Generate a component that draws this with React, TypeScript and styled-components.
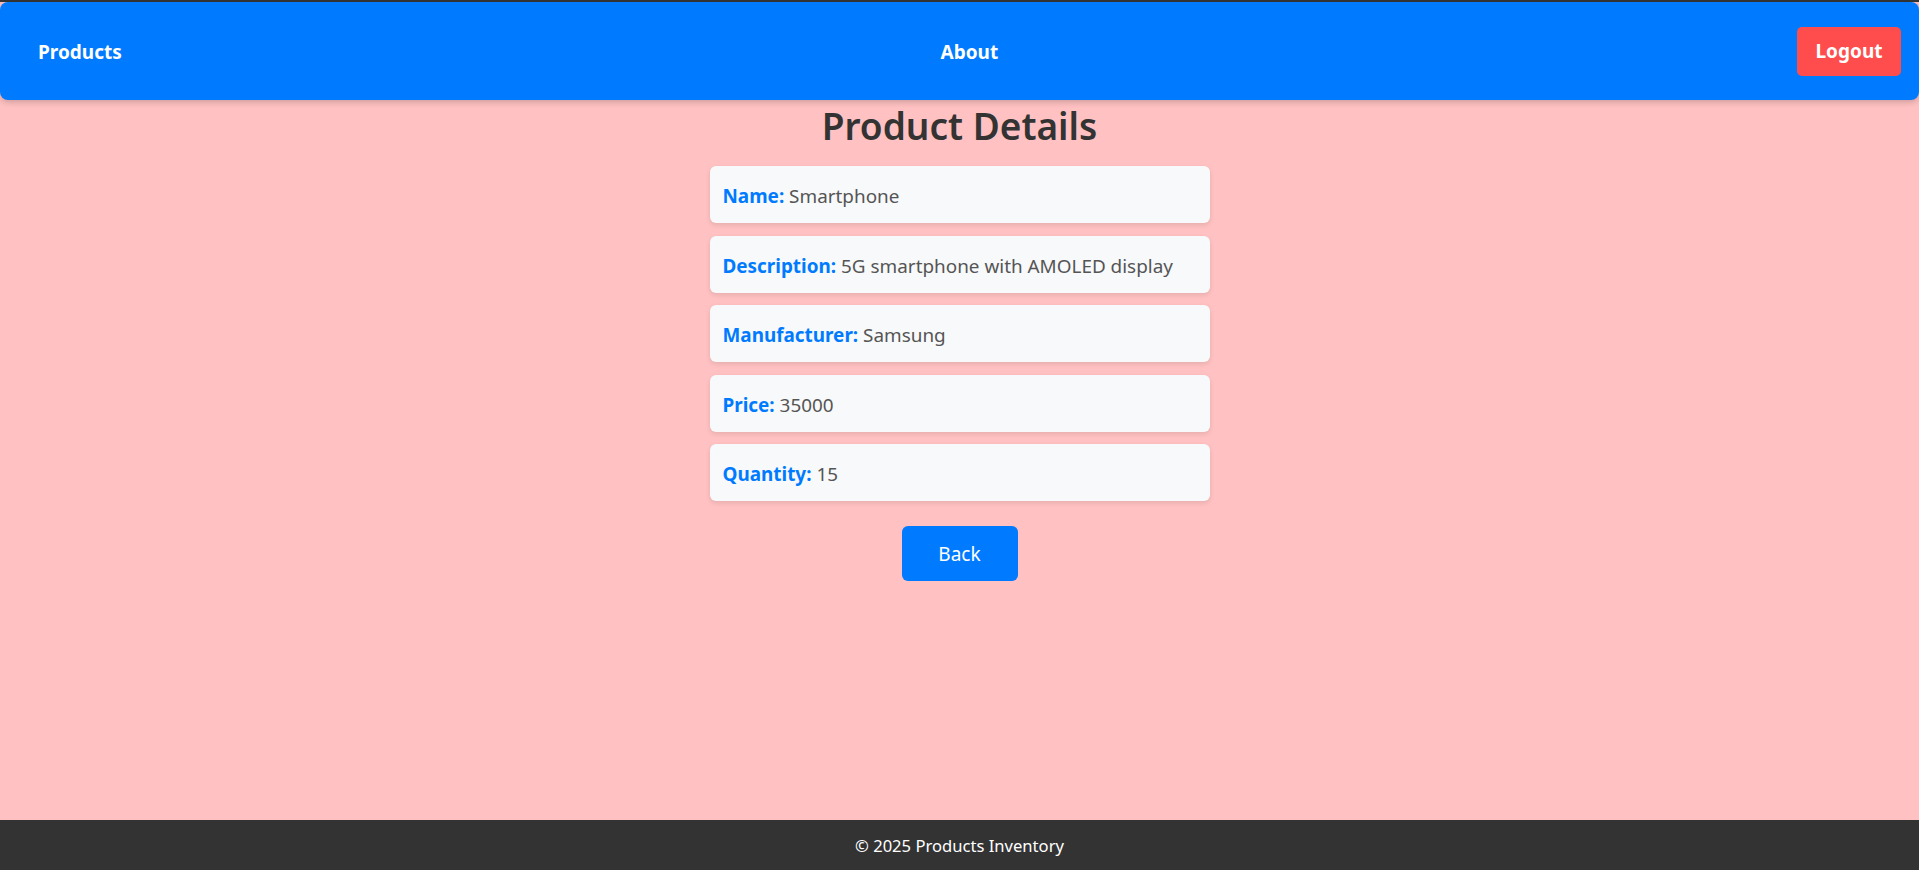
import React from "react";
import styled, { createGlobalStyle } from "styled-components";

const GlobalStyle = createGlobalStyle`
  html, body {
    margin: 0;
    padding: 0;
  }
  body {
    background: #ffc1c1;
    font-family: "Noto Sans", "Open Sans", Arial, sans-serif;
    border-top: 2px solid #333;
  }
  * { box-sizing: border-box; }
`;

const Page = styled.div`
  min-height: 868px;
  display: flex;
  flex-direction: column;
`;

const NavBar = styled.nav`
  height: 98px;
  padding: 2px 18px 0;
  background: #007bff;
  border-radius: 8px;
  box-shadow: 0 2px 6px rgba(0, 0, 0, 0.2);
  display: flex;
  align-items: center;
  justify-content: space-between;
`;

const NavLink = styled.a`
  padding: 10px 20px;
  color: #fff;
  font-weight: 700;
  font-size: 19px;
  text-decoration: none;
`;

const LogoutButton = styled.button`
  width: 104px;
  height: 49px;
  margin-top: -2px;
  border: none;
  border-radius: 5px;
  background: #ff4d4d;
  color: #fff;
  font-family: inherit;
  font-weight: 700;
  font-size: 19px;
  cursor: pointer;
`;

const Main = styled.main`
  flex: 1;
  display: flex;
  flex-direction: column;
  align-items: center;
`;

const Title = styled.h1`
  margin: 0 0 14px;
  font-size: 37px;
  line-height: 52px;
  font-weight: 600;
  color: #333;
`;

const CardList = styled.div`
  width: 500px;
  display: flex;
  flex-direction: column;
  gap: 12.5px;
`;

const Card = styled.div`
  height: 57px;
  padding: 3px 13px 0;
  display: flex;
  align-items: center;
  background: #f8f9fa;
  border-radius: 6px;
  box-shadow: 0 2px 5px rgba(0, 0, 0, 0.1);
  font-size: 18.9px;
  color: #555;
`;

const Label = styled.strong`
  color: #007bff;
  font-weight: 700;
`;

const BackButton = styled.button`
  margin-top: 25px;
  width: 116px;
  height: 55px;
  border: none;
  border-radius: 6px;
  background: #007bff;
  color: #fff;
  font-family: inherit;
  font-size: 19px;
  cursor: pointer;
`;

const Footer = styled.footer`
  height: 50px;
  background: #333;
  color: #fff;
  display: flex;
  align-items: center;
  justify-content: center;
  font-size: 16.6px;
`;

const details: [string, string][] = [
  ["Name", "Smartphone"],
  ["Description", "5G smartphone with AMOLED display"],
  ["Manufacturer", "Samsung"],
  ["Price", "35000"],
  ["Quantity", "15"],
];

export default function App() {
  return (
    <Page>
      <GlobalStyle />
      <NavBar>
        <NavLink href="#">Products</NavLink>
        <NavLink href="#">About</NavLink>
        <LogoutButton>Logout</LogoutButton>
      </NavBar>
      <Main>
        <Title>Product Details</Title>
        <CardList>
          {details.map(([label, value]) => (
            <Card key={label}>
              <span>
                <Label>{label}:</Label> {value}
              </span>
            </Card>
          ))}
        </CardList>
        <BackButton>Back</BackButton>
      </Main>
      <Footer>© 2025 Products Inventory</Footer>
    </Page>
  );
}
